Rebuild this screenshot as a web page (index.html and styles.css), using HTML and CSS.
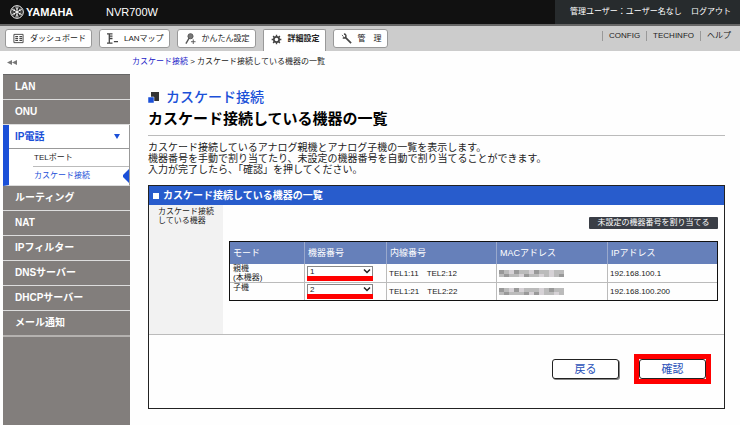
FILE: index.html
```html
<!DOCTYPE html>
<html lang="ja">
<head>
  <meta charset="UTF-8">
  <meta name="viewport" content="width=device-width, initial-scale=1.0">
  <title>NVR700W - カスケード接続</title>
  <link rel="stylesheet" href="styles.css">
</head>
<body>
  <header class="header">
    <div class="brand">
      <svg class="brand-mark" viewBox="0 0 14 14" fill="none" stroke="#fff">
        <circle cx="7" cy="7" r="6.3" stroke-width="1"/>
        <path d="M7 1.5v11M2.2 4.2l9.6 5.6M11.8 4.2L2.2 9.8" stroke-width="1"/>
        <path d="M5.5 2.5L7 4.5l1.5-2M5.5 11.5L7 9.5l1.5 2M2.4 6l2.4-.3-.9-2.2M11.6 6l-2.4-.3.9-2.2M2.4 8l2.4.3-.9 2.2M11.6 8l-2.4.3.9 2.2" stroke-width=".7"/>
      </svg>
      <span class="brand-name">YAMAHA</span>
    </div>
    <span class="model">NVR700W</span>
    <div class="user">
      <span>管理ユーザー：ユーザー名なし</span>
      <a href="#">ログアウト</a>
    </div>
  </header>

  <nav class="nav">
    <a class="tab" href="#">
      <svg viewBox="0 0 12 12" fill="none" stroke="#444"><path d="M1 1.5h10v9H1z"/><path d="M2.500 4h3M2.500 6h3M2.500 8h3M7 4h3M7 6h3M7 8h3" stroke-width="1.200"/></svg>
      <span>ダッシュボード</span>
    </a>
    <a class="tab" href="#">
      <svg viewBox="0 0 12 12" fill="none" stroke="#444"><path d="M0 1h6M2.500 1v10M2.500 3.500H6M2.500 6H6M0 11h6M7.500 9.500H12" stroke-width="1.400"/></svg>
      <span>LANマップ</span>
    </a>
    <a class="tab" href="#">
      <svg viewBox="0 0 12 12" fill="none" stroke="#555"><circle cx="6" cy="3.500" r="2.800" fill="#777"/><path d="M4.500 5.500L1 11.500" stroke-width="1.500"/><path d="M9 7v5M6.500 9.500h5"/></svg>
      <span>かんたん設定</span>
    </a>
    <a class="tab active" href="#">
      <svg viewBox="0 0 12 12" fill="none" stroke="#444"><circle cx="6" cy="6" r="2.900" stroke-width="1.900"/><path d="M6 .7v2M6 9.300v2M.7 6h2M9.300 6h2M2.300 2.300l1.400 1.400M8.300 8.300l1.400 1.400M9.700 2.300L8.300 3.700M3.700 8.300L2.300 9.700" stroke-width="1.500"/></svg>
      <span>詳細設定</span>
    </a>
    <a class="tab" href="#">
      <svg viewBox="0 0 12 12" fill="none" stroke="#444"><path d="M4.500 4.500l6.500 6.500" stroke-width="1.800"/><path d="M3.200 1.200c2 0 2.600 1.600 2 3s-2 1.600-3.200.8" stroke-width="1.600"/><path d="M1 2.200l1.800 1.800"/></svg>
      <span>管　理</span>
    </a>
    <div class="links">
      <a href="#">CONFIG</a>
      <a href="#">TECHINFO</a>
      <a href="#">ヘルプ</a>
    </div>
  </nav>

  <div class="layout">
    <aside class="sidebar">
      <a class="collapse" href="#" aria-label="メニューを閉じる">
        <svg viewBox="0 0 10 5" fill="#777"><path d="M5 0v5L0 2.500zM10 0v5L5 2.500z"/></svg>
      </a>
      <ul class="menu">
        <li><a href="#">LAN</a></li>
        <li><a href="#">ONU</a></li>
        <li class="open">
          <a href="#">IP電話
            <svg class="caret" viewBox="0 0 6 5" fill="#1b50d8"><path d="M0 0h6L3 5z"/></svg>
          </a>
          <ul class="submenu">
            <li><a href="#">TELポート</a></li>
            <li class="current"><a href="#">カスケード接続</a>
              <svg class="pointer" viewBox="0 0 6 14" fill="#1b50d8"><path d="M6 0v14L0 8V6z"/></svg>
            </li>
          </ul>
        </li>
        <li><a href="#">ルーティング</a></li>
        <li><a href="#">NAT</a></li>
        <li><a href="#">IPフィルター</a></li>
        <li><a href="#">DNSサーバー</a></li>
        <li><a href="#">DHCPサーバー</a></li>
        <li><a href="#">メール通知</a></li>
      </ul>
    </aside>

    <main class="main">
      <div class="breadcrumb"><a href="#">カスケード接続</a> &gt; カスケード接続している機器の一覧</div>
      <div class="content">
        <h1>
          <svg viewBox="0 0 11 11"><path d="M3 0h8v9H3z" fill="#333"/><path d="M0 5h6v6H0z" fill="#1b50d8" stroke="#fff" stroke-width=".5"/></svg>
          カスケード接続
        </h1>
        <h2>カスケード接続している機器の一覧</h2>
        <p class="lead">カスケード接続しているアナログ親機とアナログ子機の一覧を表示します。<br>
          機器番号を手動で割り当てたり、未設定の機器番号を自動で割り当てることができます。<br>
          入力が完了したら、「確認」を押してください。</p>

        <form class="panel">
          <h3>カスケード接続している機器の一覧</h3>
          <div class="panel-body">
            <div class="row-label">カスケード接続<br>している機器</div>
            <div class="row-value">
              <button class="assign" type="button">未設定の機器番号を割り当てる</button>
              <table>
                <thead>
                  <tr>
                    <th class="col-mode">モード</th>
                    <th class="col-number">機器番号</th>
                    <th class="col-ext">内線番号</th>
                    <th class="col-mac">MACアドレス</th>
                    <th>IPアドレス</th>
                  </tr>
                </thead>
                <tbody>
                  <tr>
                    <td class="mode">親機<br>(本機器)</td>
                    <td>
                      <div class="select">
                        <select aria-label="親機の機器番号"><option>1</option><option>2</option></select>
                        <svg viewBox="0 0 8 5" fill="none" stroke="#222" stroke-width="1.500"><path d="M1 .5l3 3 3-3"/></svg>
                      </div>
                    </td>
                    <td>TEL1:11　TEL2:12</td>
                    <td><svg class="mask" viewBox="0 0 65 7" shape-rendering="crispEdges"><path fill="#bbb" d="M0 0h65v7H0z"/><path fill="#999" d="M0 0h5v4H0zM5 4h5v3H5zM15 0h5v4h-5zM25 4h5v3h-5zM35 0h5v4h-5zM60 4h5v3h-5z"/><path fill="#d6d2d6" d="M10 0h5v4h-5zM20 4h5v3h-5zM30 0h5v4h-5zM40 4h5v3h-5zM50 0h5v7h-5z"/></svg></td>
                    <td>192.168.100.1</td>
                  </tr>
                  <tr>
                    <td class="mode">子機</td>
                    <td>
                      <div class="select">
                        <select aria-label="子機の機器番号"><option>2</option><option>1</option></select>
                        <svg viewBox="0 0 8 5" fill="none" stroke="#222" stroke-width="1.500"><path d="M1 .5l3 3 3-3"/></svg>
                      </div>
                    </td>
                    <td>TEL1:21　TEL2:22</td>
                    <td><svg class="mask" viewBox="0 0 65 7" shape-rendering="crispEdges"><path fill="#bbb" d="M0 0h65v7H0z"/><path fill="#999" d="M0 0h5v4H0zM5 4h5v3H5zM15 0h5v4h-5zM25 4h5v3h-5zM35 4h5v3h-5zM50 0h5v4h-5z"/><path fill="#d6d2d6" d="M10 0h5v4h-5zM20 0h5v4h-5zM30 4h5v3h-5zM40 0h5v7h-5zM55 4h5v3h-5z"/></svg></td>
                    <td>192.168.100.200</td>
                  </tr>
                </tbody>
              </table>
            </div>
          </div>
          <div class="actions">
            <button class="btn" type="button">戻る</button>
            <div class="highlight"><button class="btn" type="button">確認</button></div>
          </div>
        </form>
      </div>
    </main>
  </div>
</body>
</html>
```

FILE: styles.css
```css
* { box-sizing: border-box; }
html, body { height: 100%; }
body { display: flex; flex-direction: column; margin: 0; background: #fefefe; color: #222; font: 8px/10px "Liberation Sans", "Noto Sans CJK JP", sans-serif; }
a { color: inherit; text-decoration: none; }
ul { list-style: none; margin: 0; padding: 0; }
h1, h2, h3, p { margin: 0; }
button, select { font-family: inherit; }
svg { display: block; flex: none; }

/* header */
.header { display: flex; flex: none; align-items: center; height: 26px; padding-left: 10px; background: #111; border-bottom: 2px solid #666; color: #fff; }
.brand { display: flex; align-items: center; width: 96px; }
.brand-mark { width: 14px; height: 14px; margin-right: 2px; }
.brand-name { font-size: 11px; font-weight: bold; line-height: 16px; }
.model { font-size: 11px; }
.user { display: flex; align-items: center; justify-content: space-between; width: 185px; height: 100%; margin-left: auto; padding: 0 9px 0 15px; background: #272b2d; }

/* tabs */
.nav { display: flex; flex: none; align-items: flex-start; gap: 7px; height: 25px; padding: 3px 9px 0 5px; background: #ccc; }
.tab { display: flex; align-items: center; gap: 6px; height: 19px; padding: 0 5px 0 7px; background: #fff; border: 1px solid #999; border-radius: 3px; white-space: nowrap; }
.tab svg { width: 11px; height: 11px; }
.tab.active { height: 22px; padding-bottom: 3px; border-bottom: 0; border-radius: 2px 2px 0 0; font-weight: bold; }
.links { display: flex; margin: 2px 0 0 auto; }
.links a { padding-left: 6px; border-left: 1px solid #999; }
.links a + a { margin-left: 6px; }

.layout { display: flex; flex: 1; }

/* side menu */
.sidebar { display: flex; flex: none; flex-direction: column; width: 130px; padding-left: 3px; }
.collapse { height: 23px; padding: 9px 4px 0; }
.collapse svg { width: 10px; height: 5px; }
.menu { flex: 1; background: #827e7c; border-top: 1px solid #666; color: #fff; font: bold 10px/24px "Liberation Sans", "Noto Sans CJK JP", sans-serif; }
.menu > li { border-bottom: 1px solid #ddd; }
.menu > li:last-child { border-bottom: 2px solid #b5b2b0; }
.menu a { display: block; padding-left: 12px; }
.menu .open { background: #fff; border-left: 6px solid #1b50d8; border-right: 1px solid #999; color: #1b50d8; }
.open > a { display: flex; align-items: center; justify-content: space-between; height: 23px; padding: 0 9px 0 6px; }
.menu .open > a { padding-left: 6px; }
.caret { width: 6px; height: 5px; }
.submenu { padding-bottom: 1px; border-top: 1px solid #999; font-size: 8px; font-weight: normal; line-height: 17px; }
.submenu li { display: flex; align-items: center; justify-content: space-between; margin-left: 24px; color: #222; }
.submenu li + li { border-top: 1px solid #bbb; }
.menu .submenu a { padding-left: 1px; }
.submenu .current { color: #1b50d8; }
.pointer { width: 6px; height: 14px; }

/* page */
.main { flex: 1; min-width: 0; padding: 6px 15px 16px 2px; }
.breadcrumb a { color: #1a1ac8; }
.content { padding: 21px 0 0 16px; }
h1 { display: flex; align-items: center; gap: 7px; color: #1b50d8; font-size: 14px; font-weight: 500; line-height: 18px; }
h1 svg { width: 11px; height: 11px; }
h2 { padding: 4px 0 7px; border-bottom: 1px solid #bbb; color: #000; font-size: 15px; line-height: 18px; }
.lead { padding: 6px 0 10px; font-size: 10px; line-height: 11px; white-space: nowrap; }

.panel { border: 1px solid #222; }
.panel h3 { display: flex; align-items: center; gap: 4px; height: 19px; padding-left: 4px; background: #285ccc; color: #fff; font-size: 10px; }
.panel h3::before { content: ""; width: 6px; height: 6px; background: #fff; }
.panel-body { display: flex; height: 130px; border-bottom: 1px solid #bbb; }
.row-label { width: 74px; padding: 2px 0 0 9px; background: #f2f2f2; line-height: 9px; }
.row-value { display: flex; flex: 1; flex-direction: column; padding: 12px 6px 0; }
.assign { align-self: flex-end; width: 129px; height: 12px; padding: 0; background: #3a3e46; border: 0; border-radius: 1px; color: #fff; font-size: 8px; line-height: 12px; }

table { width: 100%; margin-top: 12px; border: 1px solid #111; border-spacing: 0; table-layout: fixed; }
th { height: 22px; padding: 0 3px; background: #6680ba; border-left: 1px solid #99a8cc; color: #fff; font-size: 9px; font-weight: normal; text-align: left; }
td { height: 18px; padding: 0 2px; border-top: 1px solid #bbb; border-left: 1px solid #bbb; line-height: 9px; }
th:first-child, td:first-child { padding-left: 3px; border-left: 0; }
tbody tr:first-child td { border-top: 0; }
.mode { vertical-align: top; }
.col-mode { width: 74px; }
.col-number { width: 82px; }
.col-ext { width: 110px; }
.col-mac { width: 111px; }
.select { position: relative; width: 66px; border-bottom: 5px solid #f00; }
.select select { display: block; appearance: none; width: 100%; height: 10px; padding: 0 2px; background: #fff; border: 1px solid #888; border-bottom: 0; border-radius: 0; color: #222; font-size: 8px; line-height: 9px; }
.select svg { position: absolute; top: 3px; right: 2px; width: 8px; height: 5px; pointer-events: none; }
.mask { width: 65px; height: 7px; }

.actions { display: flex; align-items: center; justify-content: flex-end; gap: 15px; padding: 19px 13px 24px; }
.btn { width: 67px; height: 20px; padding: 0; background: #fff; border: 1px solid #222; border-radius: 3px; box-shadow: 1px 1px 0 #888; color: #2850b8; font-size: 11px; line-height: 16px; }
.highlight { border: 5px solid #f00; }
.highlight .btn { display: block; box-shadow: none; }
```
